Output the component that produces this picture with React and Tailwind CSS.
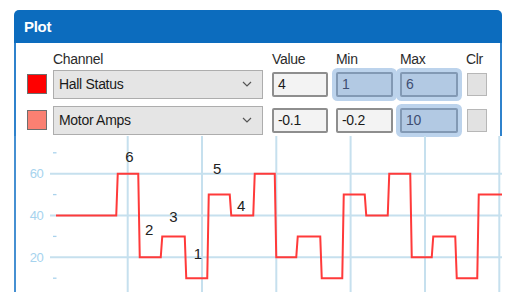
const ROWS = [
  { color: 'bg-[#ff0000]', channel: 'Hall Status', value: '4', min: '1', max: '6', minHi: true, maxHi: true },
  { color: 'bg-[#fa8072]', channel: 'Motor Amps', value: '-0.1', min: '-0.2', max: '10', minHi: false, maxHi: true },
];

// x where the trace changes level, and the level it goes to
const STEPS = [
  [117, 60], [139, 20], [161.5, 30], [185.5, 10], [208, 50], [230.5, 40],
  [254, 60], [275.5, 20], [297, 30], [321, 10], [343, 50], [365.5, 40],
  [388.5, 60], [411, 20], [432.5, 30], [456, 10], [478, 50],
];

const LABELS = [
  { t: '6', x: 129.3, y: 156.3 },
  { t: '2', x: 149, y: 229.7 },
  { t: '3', x: 173.3, y: 216.7 },
  { t: '1', x: 197.7, y: 254 },
  { t: '5', x: 217, y: 169 },
  { t: '4', x: 241, y: 205.3 },
];

const vy = (v) => 215.5 - (v - 40) * 2.09;

function tracePoints() {
  const pts = [[56, vy(40)]];
  let level = 40;
  for (const [x, next] of STEPS) {
    pts.push([x - 0.75, vy(level)]);
    pts.push([x + 0.75, vy(next)]);
    level = next;
  }
  pts.push([503, vy(level)]);
  return pts.map(([x, y]) => `${x},${y}`).join(' ');
}

function Chevron() {
  return (
    <svg width="10" height="6" viewBox="0 0 10 6" className="shrink-0">
      <polyline points="1,1 5,5 9,1" fill="none" stroke="#555" strokeWidth="1.2" />
    </svg>
  );
}

function NumBox({ text, hi, className }) {
  return (
    <div
      className={`flex h-[25px] items-center rounded-[2px] border-2 pl-[4px] ${className} ${
        hi
          ? 'border-[#8299b4] bg-[#b2c9e3] text-[#3f4e72] shadow-[0_0_0_4px_#bcd3ec]'
          : 'border-[#8e8e8e] bg-[#f3f3f3] text-[#1a1a1a]'
      }`}
    >
      {text}
    </div>
  );
}

function Chart() {
  const vlines = [127.7, 202, 276.3, 350.6, 425, 499.3];
  const hlines = [60, 40, 20];
  const ticks = [70, 50, 30, 10];
  return (
    <svg width="486" height="160" viewBox="16 136 486 160" className="block">
      {vlines.map((x) => (
        <line key={x} x1={x} y1="136" x2={x} y2="296" stroke="#c6e0ee" strokeWidth="2" />
      ))}
      {hlines.map((v) => (
        <line key={v} x1="50" y1={vy(v)} x2="502" y2={vy(v)} stroke="#c6e0ee" strokeWidth="2" />
      ))}
      {ticks.map((v) => (
        <line key={v} x1="53" y1={vy(v)} x2="56.5" y2={vy(v)} stroke="#a9d2ec" strokeWidth="1.3" />
      ))}
      {hlines.map((v) => (
        <text
          key={v}
          x="43.5"
          y={vy(v) + 4.6}
          textAnchor="end"
          fontSize="13"
          fill="#a6d3ee"
          fontFamily="'Liberation Sans', Arial, sans-serif"
        >
          {v}
        </text>
      ))}
      <polyline points={tracePoints()} fill="none" stroke="#ff3a3a" strokeWidth="2" />
      {LABELS.map((l) => (
        <text
          key={l.t}
          x={l.x}
          y={l.y + 5.4}
          textAnchor="middle"
          fontSize="15"
          fill="#222"
          fontFamily="'Liberation Sans', Arial, sans-serif"
        >
          {l.t}
        </text>
      ))}
    </svg>
  );
}

export default function App() {
  return (
    <div className="h-[292px] w-[510px] overflow-hidden bg-white font-['Liberation_Sans',Arial,sans-serif] text-[14px] tracking-[-0.3px] text-[#262626]">
      <div className="ml-[14px] mt-[10px] w-[488px]">
        <div className="flex h-[33px] items-center rounded-t-[5px] bg-[#0c6cbe] pl-[10px] pt-[2px] text-[15px] font-bold text-white">
          Plot
        </div>
        <div className="border-x-2 border-[#2f82cc] pl-[11px] pt-[8px] pb-[1px]">
          <div className="flex h-[16px] items-center leading-[16px] text-[#2b2b2b]">
            <span className="ml-[26px] w-[210px]">Channel</span>
            <span className="ml-[9px] w-[56px]">Value</span>
            <span className="ml-[8px] w-[57px]">Min</span>
            <span className="ml-[7px] w-[58px]">Max</span>
            <span className="ml-[8px] w-[20px]">Clr</span>
          </div>
          <div className="mt-[2px] flex flex-col gap-[6px]">
            {ROWS.map((r) => (
              <div key={r.channel} className="flex h-[30px] items-center">
                <div className={`h-[20px] w-[20px] border border-[#6e6e6e] ${r.color}`} />
                <div className="ml-[6px] flex h-[29px] w-[210px] items-center justify-between border border-[#adadad] bg-[#e5e5e5] pl-[5px] pr-[10px] text-[#1a1a1a]">
                  <span>{r.channel}</span>
                  <Chevron />
                </div>
                <NumBox text={r.value} className="ml-[9px] w-[56px]" />
                <NumBox text={r.min} hi={r.minHi} className="ml-[8px] w-[57px]" />
                <NumBox text={r.max} hi={r.maxHi} className="ml-[7px] w-[58px]" />
                <div className="ml-[9px] h-[23px] w-[20px] border border-[#b7b7b7] bg-[#e2e2e2]" />
              </div>
            ))}
          </div>
        </div>
        <div className="border-l-2 border-[#4690d2]">
          <Chart />
        </div>
      </div>
    </div>
  );
}
